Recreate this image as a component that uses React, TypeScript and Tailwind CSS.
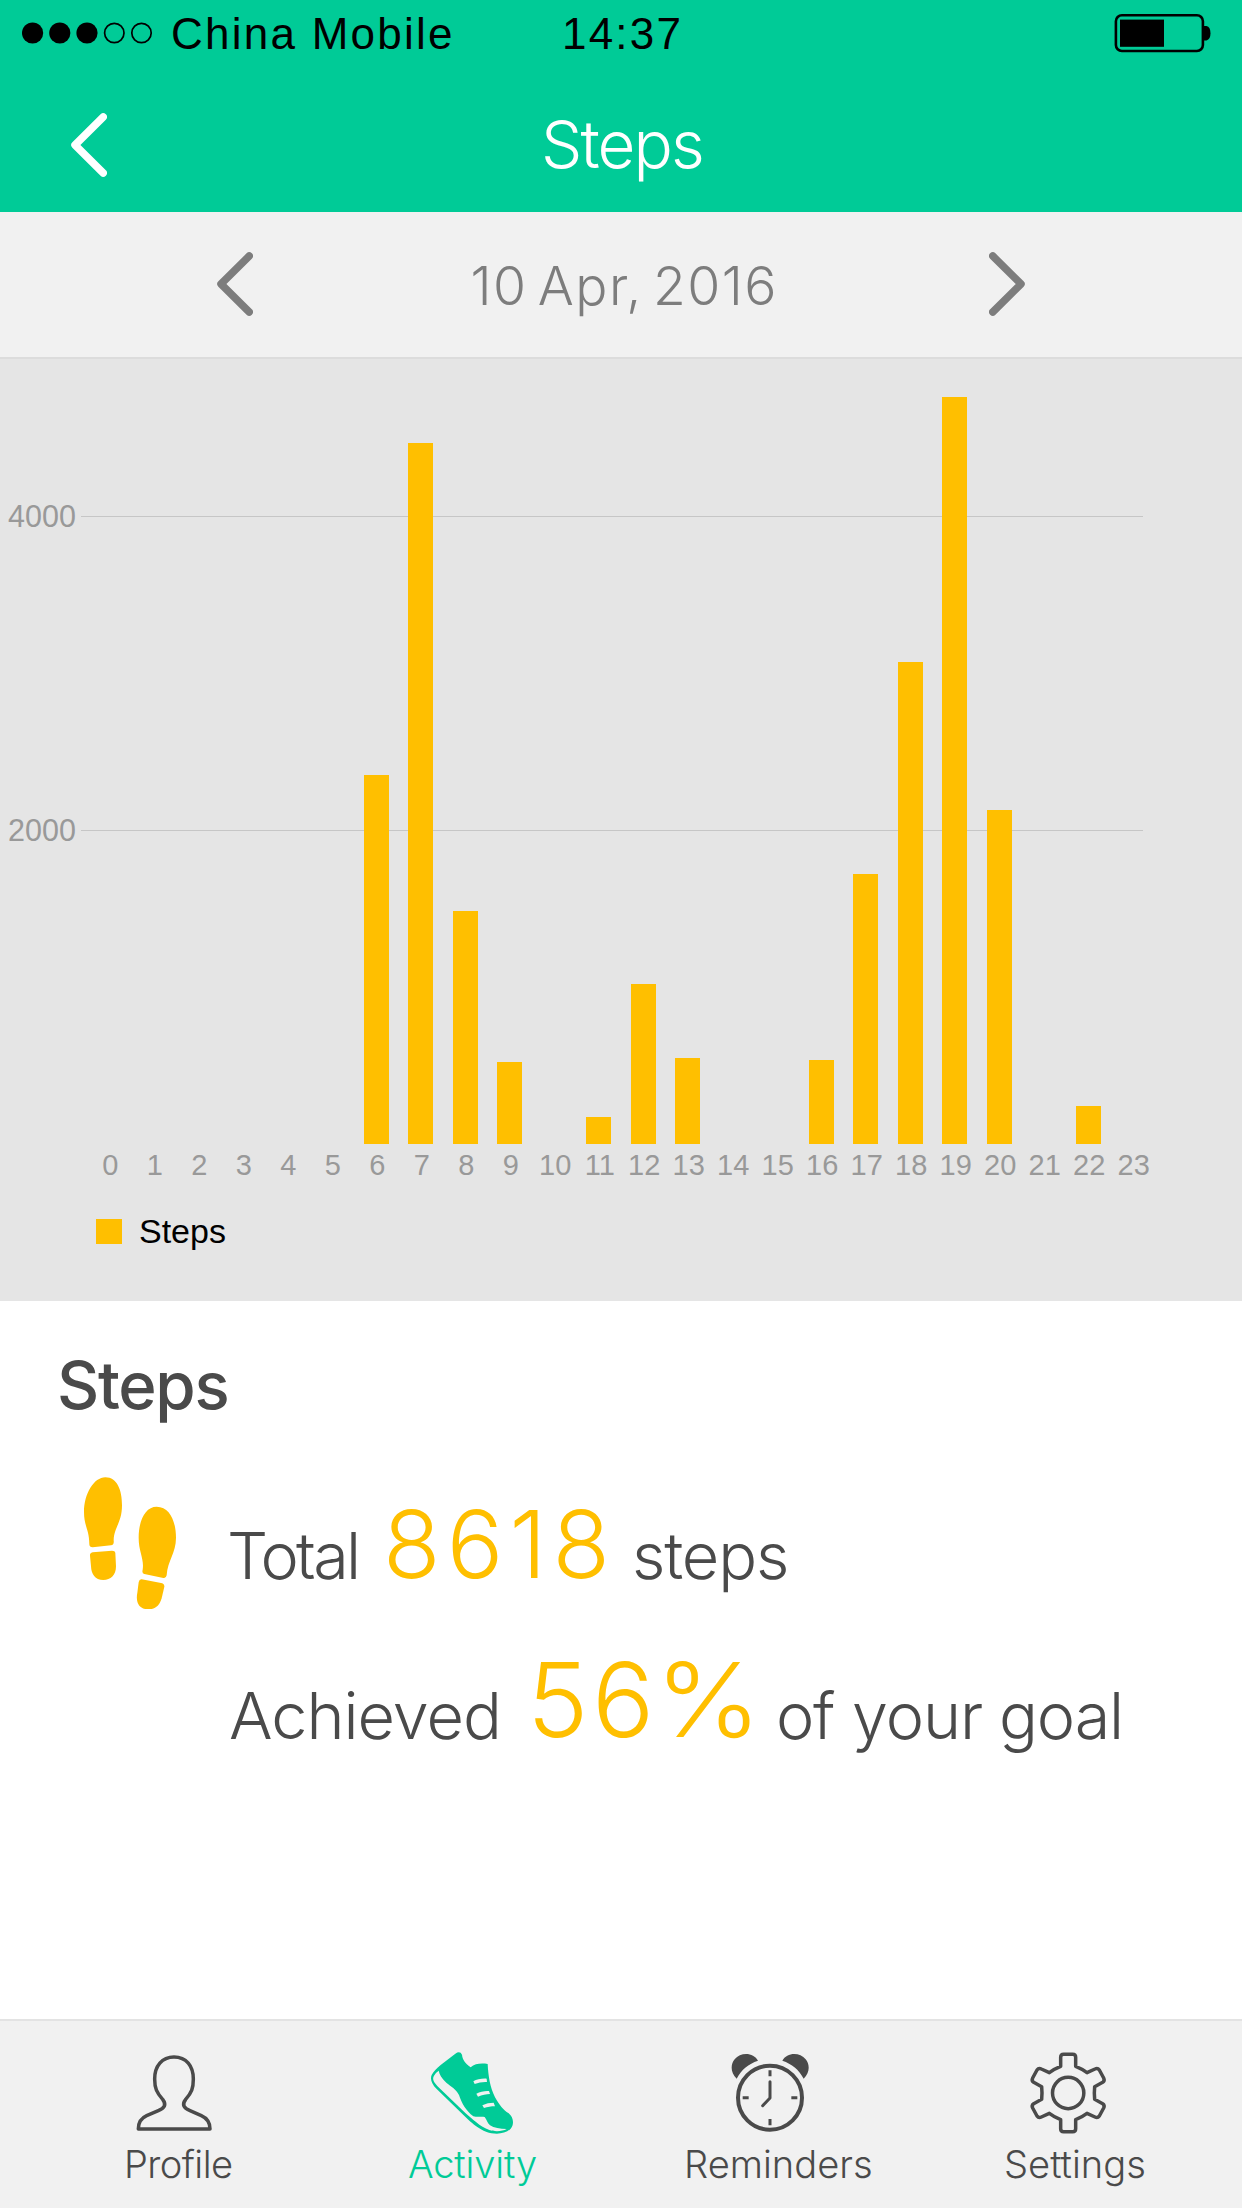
import type { ReactNode } from "react";

const HOURLY_STEPS = [
  0, 0, 0, 0, 0, 0, 2350, 4467, 1484, 524, 0, 170, 1022, 550, 0, 0, 538, 1720, 3073, 4758, 2130, 0, 239, 0,
];
const PX_PER_STEP = 0.157;

function Chevron({ dir, color }: { dir: "left" | "right"; color: string }) {
  return (
    <svg className="-mt-px h-[66px] w-[36px] shrink-0" viewBox="0 0 36 66" fill="none" stroke={color} strokeWidth="7.5" strokeLinecap="round" strokeLinejoin="round">
      <path d={dir === "left" ? "M32.2 5 4 33l28.200 28" : "M3.8 5 32 33 3.800 61"} />
    </svg>
  );
}

function StatusBar() {
  return (
    <div className="flex h-[68px] items-center pl-[22px] font-['Liberation_Sans',sans-serif] text-[44px] leading-none text-black">
      <svg className="-mt-[2px] h-6 w-[132px]" viewBox="0 0 132 24">
        {[10.6, 37.8, 65].map((x) => <circle key={x} cx={x} cy="12" r="10.6" />)}
        {[92.3, 119.5].map((x) => <circle key={x} cx={x} cy="12" r="9.7" fill="none" stroke="#000" strokeWidth="1.7" />)}
      </svg>
      <span className="ml-[17px] w-[391px] whitespace-nowrap tracking-[2.25px]">China Mobile</span>
      <span className="w-[552px] whitespace-nowrap tracking-[2.2px]">14:37</span>
      <svg className="-mt-[2px] h-[40px] w-[98px]" viewBox="0 0 98 40">
        <rect x="1.9" y="2.2" width="87" height="35.8" rx="6" fill="none" stroke="#000" strokeWidth="2.6" />
        <rect x="6" y="6.6" width="44" height="27.2" />
        <path d="M89 13h3.5q4 1 4 7.2t-4 7.2H89z" />
      </svg>
    </div>
  );
}

function FootprintsIcon() {
  return (
    <svg className="h-[132px] w-[92px] shrink-0" viewBox="132 440 276 396" fill="#ffbf00">
      <path d="M196 441C232 441 246 480 246 525C246 578 222 590 221 630Q223 643 213 645L158 651Q148 651 148 642C148 598 132 588 132 545C132 490 162 441 196 441Z" />
      <path d="M158 666L216 661Q225 661 226 668L228 708C228 735 212 749 190 749C165 749 154 732 153 708L150 676Q149 668 158 666Z" />
      <path d="M350 529C390 529 408 575 408 622C408 668 383 690 380 735Q378 745 370 743L313 731Q305 729 308 718C313 685 296 665 296 622C296 570 316 529 350 529Z" />
      <path d="M305 747L367 759Q374 762 373 769L365 804C358 828 344 837 325 837C300 837 288 820 291 795L296 756Q298 746 305 747Z" />
    </svg>
  );
}

function ProfileIcon() {
  return (
    <svg className="ml-[12px] h-[84px] w-[76px]" viewBox="108 126 228 252" fill="none" stroke="#4a4a4a" strokeWidth="10.5" strokeLinejoin="round">
      <path d="M115 357C115 336 122 325 140 317L175 302C194 294 200 284 188 268C170 248 164 235 164 207C164 168 186 141 222 141C259 141 280 168 280 207C280 235 275 248 257 268C245 284 251 294 270 302L304 317C322 325 330 336 330 357Z" />
    </svg>
  );
}

function ShoeIcon() {
  return (
    <svg className="ml-[22px] h-[84px] w-[84px]" viewBox="120 126 252 252">
      <path fill="#00cb97" d="M196 131Q210 121 216 134C218 150 224 158 242 172C255 161 272 159 293 162C295 200 300 230 315 262C328 285 340 300 356 310C371 322 373 343 362 356C345 375 310 373 290 366C265 356 250 342 235 329L140 237C124 221 120 206 125 195C130 185 140 175 152 165Z" />
      <g fill="#f1f1f1">
        <path d="M146 182C148 193 155 205 169 218C185 232 198 236 207 255C215 280 228 302 250 319C262 322 275 319 284 321C291 330 292 340 300 346C312 354 330 357 350 357C338 364 315 366 298 360C270 350 246 326 226 309L148 234C130 216 126 207 132 197Q138 187 146 182Z" />
        <path d="M290 206L291 216C278 215 266 218 254 222L250 214C260 208 276 205 290 206Z" />
        <path d="M297 243L300 252C289 252 276 255 264 260L259 251C271 245 284 242 297 243Z" />
        <path d="M311 278L315 289C303 289 293 291 282 294L277 286C288 280 299 278 311 278Z" />
      </g>
    </svg>
  );
}

function AlarmIcon() {
  const bell = "M230 206C210 188 212 162 224 148C242 125 281 127 294 152C265 162 245 178 230 206Z";
  return (
    <svg className="ml-[46px] h-[84px] w-[80px]" viewBox="210 126 240 252" fill="none" stroke="#4a4a4a" strokeWidth="9">
      <circle cx="330" cy="263" r="96" strokeWidth="12" />
      <path d="M330 181v18M330 327v19M248 263h18M394 263h18" />
      <path d="M330 215v49l-22 23" strokeLinecap="round" strokeLinejoin="round" />
      <path d={bell} fill="#4a4a4a" stroke="none" />
      <path d={bell} fill="#4a4a4a" stroke="none" transform="matrix(-1 0 0 1 661 0)" />
    </svg>
  );
}

function GearIcon() {
  return (
    <svg className="ml-[24px] h-[84px] w-[80px]" viewBox="144 126 240 252" fill="none" stroke="#4a4a4a" strokeWidth="10.5" strokeLinejoin="round">
      <circle cx="264.5" cy="249" r="47" />
      <path d="M242 169V142Q242 133 251 133H278Q287 133 287 142V169Q305 176 321 188L345 177Q353 173 358 180L371 204Q375 212 368 217L344 230Q342 249 344 268L368 281Q375 286 371 294L358 318Q353 325 345 321L321 310Q305 322 287 329V356Q287 365 278 365H251Q242 365 242 356V329Q224 322 208 310L184 321Q176 325 171 318L158 294Q154 286 161 281L185 268Q187 249 185 230L161 217Q154 212 158 204L171 180Q176 173 184 177L208 188Q224 176 242 169Z" />
    </svg>
  );
}

function Tab({ icon, label, className }: { icon: ReactNode; label: string; className: string }) {
  return (
    <div className={"flex flex-col " + className}>
      {icon}
      <span className="mt-[8px] whitespace-nowrap text-[38.1px] leading-[40px]">{label}</span>
    </div>
  );
}

function StepsChart() {
  return (
    <section className="relative h-[944px] border-t-2 border-[#dcdcdc] bg-[#e5e5e5] pt-[25px] font-['Liberation_Sans',sans-serif] text-[#999999]">
      <div className="absolute top-[141px] left-0 flex h-[32px] items-center text-[30.5px] leading-none">
        <span className="w-[81px] pl-[8px]">4000</span>
        <span className="h-px w-[1062px] bg-[#c6c6c6]" />
      </div>
      <div className="absolute top-[455px] left-0 flex h-[32px] items-center text-[30.5px] leading-none">
        <span className="w-[81px] pl-[8px]">2000</span>
        <span className="h-px w-[1062px] bg-[#c6c6c6]" />
      </div>
      <div className="relative ml-[87px] flex h-[760px] w-[1068px] items-end">
        {HOURLY_STEPS.map((steps, hour) => (
          <div key={hour} className="flex w-[44.5px] justify-center">
            <div className="w-[25px] bg-[#ffbf00]" style={{ height: steps * PX_PER_STEP }} />
          </div>
        ))}
      </div>
      <div className="mt-[6px] ml-[88px] flex h-[30px] w-[1068px] items-center text-[29px] leading-none">
        {HOURLY_STEPS.map((_, hour) => (
          <span key={hour} className="w-[44.5px] text-center">{hour}</span>
        ))}
      </div>
      <div className="mt-[32px] flex items-center pl-[96px]">
        <span className="h-[25px] w-[26px] bg-[#ffbf00]" />
        <span className="ml-[17px] text-[34px] leading-[38px] text-black">Steps</span>
      </div>
    </section>
  );
}

export default function App() {
  return (
    <main className="flex h-[2208px] w-[1242px] flex-col overflow-hidden bg-white font-['Inter',sans-serif] font-light text-[#4a4a4a]">
      <header className="h-[212px] bg-[#00cb97]">
        <StatusBar />
        <div className="mt-[10px] flex h-[134px] items-center pl-[71px] text-white">
          <Chevron dir="left" color="#fff" />
          <h1 className="ml-[434px] text-[65.4px] leading-none tracking-[-1.87px]">Steps</h1>
        </div>
      </header>

      <div className="flex h-[145px] items-center bg-[#f1f1f1] pl-[216.5px] text-[#7d7d7d]">
        <Chevron dir="left" color="#7d7d7d" />
        <span className="mt-[2px] ml-[218px] w-[518px] whitespace-nowrap text-[53.5px] leading-none tracking-[1.4px] [word-spacing:-6px]">10 Apr, 2016</span>
        <Chevron dir="right" color="#7d7d7d" />
      </div>

      <StepsChart />

      <section className="flex-1 pt-[45px]">
        <h2 className="pl-[57px] text-[65.4px] leading-[80px] font-[450] tracking-[-1.3px]">Steps</h2>
        <div className="mt-[51px] flex pl-[84px]">
          <FootprintsIcon />
          <div className="ml-[51px] whitespace-nowrap text-[64.7px] leading-none">
            <p className="mt-[21px] flex h-[94px] items-baseline">
              <span className="w-[156px] tracking-[-2.66px]">Total</span>
              <span className="relative -top-px w-[249px] text-[94px] leading-none tracking-[6.2px] text-[#ffbf00]">8618</span>
              <span className="tracking-[-1.14px]">steps</span>
            </p>
            <p className="mt-[58px] ml-[2px] flex h-[104px] items-baseline">
              <span className="w-[298px] tracking-[-1px]">Achieved</span>
              <span className="relative -top-[2px] w-[128px] text-[103.5px] leading-none tracking-[3.6px] text-[#ffbf00]">56</span>
              <span className="relative -top-[2px] w-[121px] origin-left scale-x-[1.1] text-[103.5px] leading-none text-[#ffbf00]">%</span>
              <span className="w-[76px] tracking-[-1.34px]">of</span>
              <span className="w-[147px] tracking-[-1.04px]">your</span>
              <span className="tracking-[-1.15px]">goal</span>
            </p>
          </div>
        </div>
      </section>

      <nav className="flex h-[189px] border-t-2 border-[#e3e3e3] bg-[#f1f1f1] pt-[31px] pl-[124px]">
        <Tab icon={<ProfileIcon />} label="Profile" className="w-[284px] tracking-[-0.58px]" />
        <Tab icon={<ShoeIcon />} label="Activity" className="w-[276px] tracking-[-0.19px] text-[#00cb97]" />
        <Tab icon={<AlarmIcon />} label="Reminders" className="w-[320px]" />
        <Tab icon={<GearIcon />} label="Settings" className="w-[180px]" />
      </nav>
    </main>
  );
}
